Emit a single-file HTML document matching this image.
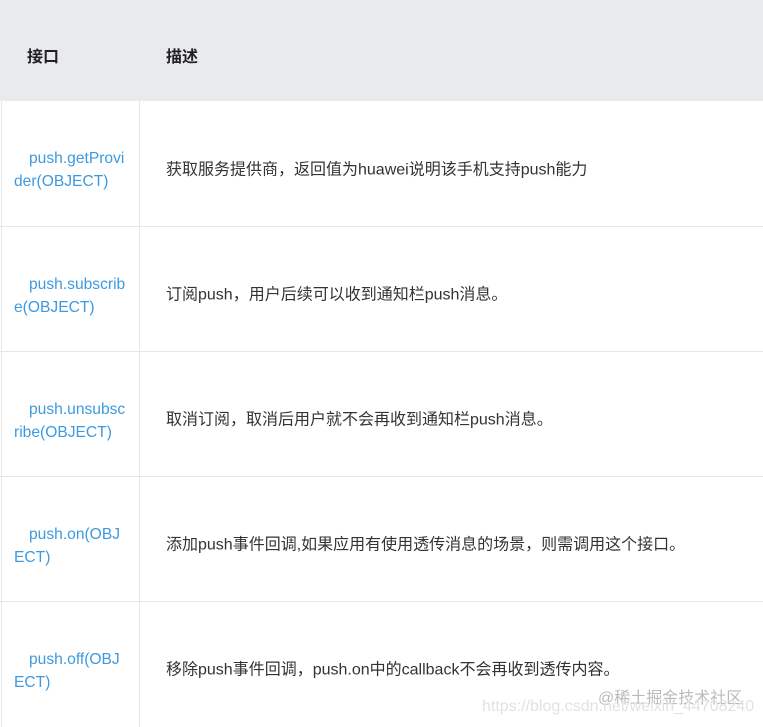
<!DOCTYPE html>
<html><head><meta charset="utf-8"><style>
body{margin:0;width:763px;height:725px;overflow:hidden;background:#fff;font-family:"Liberation Sans","Noto Sans CJK SC",sans-serif;font-size:15px;}
.h{position:absolute;left:0;top:0;width:763px;height:101px;background:#e9eaed;}
.h span{position:absolute;top:43px;font-weight:bold;color:#222;font-size:16px;}
.row{position:absolute;left:0;width:763px;height:125px;border-top:1px solid #e6e6e6;box-sizing:border-box;}
.l{position:absolute;left:1px;top:0;width:139px;height:125px;border-left:1px solid #e6e6e6;border-right:1px solid #e6e6e6;box-sizing:border-box;}
.l div{position:absolute;left:12px;width:113px;top:50%;transform:translateY(-50%);margin-top:6px;color:#3d9ae0;font-size:15.6px;line-height:23px;word-break:break-all;text-indent:15px;}
.d{position:absolute;left:166px;top:50%;transform:translateY(-50%);margin-top:6px;color:#333;font-size:16px;line-height:23px;white-space:nowrap;}
.wm{position:absolute;color:#c8c8c8;font-size:16px;}
</style></head><body>
<div class="h"><span style="left:27px">接口</span><span style="left:166px">描述</span></div>
<div class="row" style="top:101px;border-top:none"><div class="l"><div>push.getProvider(OBJECT)</div></div><div class="d">获取服务提供商，返回值为huawei说明该手机支持push能力</div></div>
<div class="row" style="top:226px"><div class="l"><div>push.subscribe(OBJECT)</div></div><div class="d">订阅push，用户后续可以收到通知栏push消息。</div></div>
<div class="row" style="top:351px"><div class="l"><div>push.unsubscribe(OBJECT)</div></div><div class="d">取消订阅，取消后用户就不会再收到通知栏push消息。</div></div>
<div class="row" style="top:476px"><div class="l"><div>push.on(OBJECT)</div></div><div class="d">添加push事件回调,如果应用有使用透传消息的场景，则需调用这个接口。</div></div>
<div class="row" style="top:601px"><div class="l"><div>push.off(OBJECT)</div></div><div class="d">移除push事件回调，push.on中的callback不会再收到透传内容。</div></div>
<div class="wm" style="left:598px;top:684px;color:#bbb">@稀土掘金技术社区</div>
<div class="wm" style="left:482px;top:698px;color:#e2e2e2">https://blog.csdn.net/weixin_44708240</div>
</body></html>
